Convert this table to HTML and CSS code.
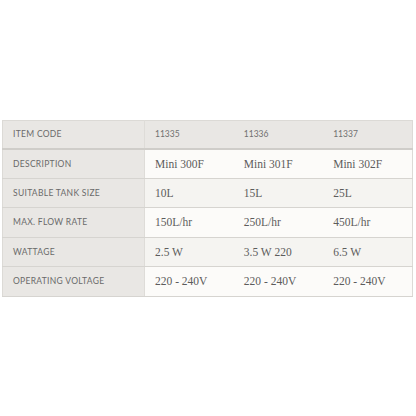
FILE: index.html
```html
<!DOCTYPE html>
<html>
<head>
<meta charset="utf-8">
<link rel="stylesheet" href="styles.css">
</head>
<body>
<div class="page">
  <table class="spec">
    <tr class="head">
      <th class="label">ITEM CODE</th>
      <th class="code">11335</th>
      <th class="code">11336</th>
      <th class="code">11337</th>
    </tr>
    <tr class="odd">
      <th class="label">DESCRIPTION</th>
      <td>Mini 300F</td><td>Mini 301F</td><td>Mini 302F</td>
    </tr>
    <tr class="even">
      <th class="label">SUITABLE TANK SIZE</th>
      <td>10L</td><td>15L</td><td>25L</td>
    </tr>
    <tr class="odd">
      <th class="label">MAX. FLOW RATE</th>
      <td>150L/hr</td><td>250L/hr</td><td>450L/hr</td>
    </tr>
    <tr class="even">
      <th class="label">WATTAGE</th>
      <td>2.5 W</td><td>3.5 W 220</td><td>6.5 W</td>
    </tr>
    <tr class="odd">
      <th class="label">OPERATING VOLTAGE</th>
      <td>220 - 240V</td><td>220 - 240V</td><td>220 - 240V</td>
    </tr>
  </table>
</div>
</body>
</html>
```
FILE: styles.css
```css
html, body {
  margin: 0;
  padding: 0;
  background: #ffffff;
}
.page {
  width: 416px;
  height: 416px;
  padding: 120px 3px 0 2px;
  box-sizing: border-box;
}
.spec {
  width: 411px;
  border-collapse: collapse;
  table-layout: fixed;
  border: 1px solid #dcdad6;
}
.spec th, .spec td {
  height: 29.5px;
  padding: 0 0 0 10px;
  text-align: left;
  vertical-align: middle;
  border-bottom: 1px solid #d6d4d0;
  box-sizing: border-box;
}
.spec .label {
  width: 142px;
  background: #e9e7e4;
  font-family: "Lato", "Open Sans", sans-serif;
  font-weight: 400;
  font-size: 8.5px;
  letter-spacing: 0.3px;
  color: #6a6a6a;
  border-right: 1px solid #dedcd8;
}
.head th {
  height: 28px;
  background: #e9e7e4;
  border-bottom: 2px solid #cfcdc9;
}
.head .code {
  font-family: "Lato", "Open Sans", sans-serif;
  font-weight: 400;
  font-size: 8.5px;
  color: #707070;
}
.spec td {
  font-family: "Liberation Serif", "DejaVu Serif", serif;
  font-size: 11.5px;
  color: #5c5c5c;
}
.odd td {
  background: #fcfbf9;
}
.even td {
  background: #f5f4f1;
}
```
